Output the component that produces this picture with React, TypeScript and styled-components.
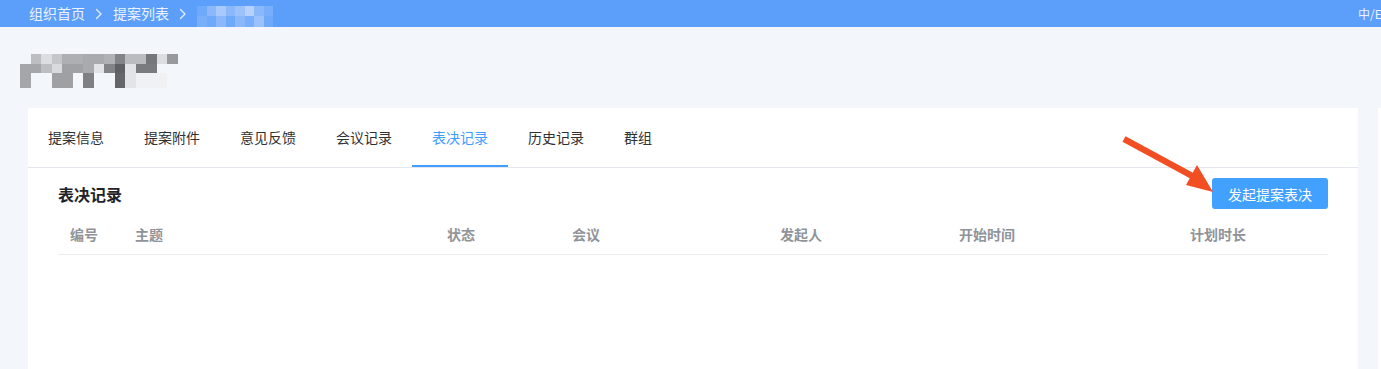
import React, { useState } from 'react';
import styled, { createGlobalStyle } from 'styled-components';

const GlobalStyle = createGlobalStyle`
   html, body {
      margin: 0;
      padding: 0;
      background: #f3f6fb;
      overflow: hidden;
   }
   body {
      font-family: "Noto Sans CJK SC", "Noto Sans", "Liberation Sans", sans-serif;
      -webkit-font-smoothing: antialiased;
   }
`;

const tabs = ['提案信息', '提案附件', '意见反馈', '会议记录', '表决记录', '历史记录', '群组'];

const columns = [
   { label: '编号', width: 65 },
   { label: '主题', width: 312 },
   { label: '状态', width: 125 },
   { label: '会议', width: 208 },
   { label: '发起人', width: 179 },
   { label: '开始时间', width: 231 },
   { label: '计划时长', width: 150 },
];

// pixelated (blurred) title, 15 x 3 cells
const B = 'transparent';
const titleMosaic = [
   [B, '#bdbec2', '#dcdde1', '#c5c6ca', '#aeafb3', '#aeafb3', '#a9aaae', '#a9aaae', '#b0b1b5', '#838488', '#bbbcc0', '#bbbcc0', '#76777b', '#dcdde1', '#98999d'],
   ['#a5a6aa', '#a5a6aa', '#bdbec2', '#d9dade', '#a0a1a5', '#a0a1a5', '#a9aaae', '#e2e3e7', '#838488', '#5f6064', '#e2e3e7', '#7a7b7f', '#7a7b7f', B, B],
   ['#a5a6aa', B, B, '#9fa0a4', '#9fa0a4', B, '#7f8084', B, B, '#65666a', '#e3e4e8', '#eff1f5', '#eff1f5', '#eff1f5', B],
];

const crumbMosaic = [
   ['#6fa9fa', '#8ab8fb', '#a7c9fc', '#8ab8fb', '#9cc2fc', '#b5d1fc', '#8ab8fb', '#78aefa'],
   ['#78aefa', '#6fa9fa', '#8ab8fb', '#6fa9fa', '#8ab8fb', '#78aefa', '#9cc2fc', '#6fa9fa'],
];

const Chevron = () => (
   <svg width="8" height="12" viewBox="0 0 8 12" fill="none">
      <path d="M1.5 1.5 L6 6 L1.5 10.5" stroke="#e6efff" strokeWidth="1.3" strokeLinecap="round" strokeLinejoin="round" />
   </svg>
);

const App: React.FC = () => {
   const [active, setActive] = useState(4);

   return (
      <>
         <GlobalStyle />
         <TopBar>
            <Breadcrumb>
               <Crumb>组织首页</Crumb>
               <Chevron />
               <Crumb>提案列表</Crumb>
               <Chevron />
               <Mosaic $cols={8} $cell={9.5} $rows="10px 11px" $bottom>
                  {crumbMosaic.flat().map((c, i) => (
                     <Cell key={i} $color={c} />
                  ))}
               </Mosaic>
            </Breadcrumb>
            <LangSwitch>中/EN</LangSwitch>
         </TopBar>

         <PageHead>
            <Mosaic $cols={15} $cell={10.5} $rows="10px 9px 15px">
               {titleMosaic.flat().map((c, i) => (
                  <Cell key={i} $color={c} />
               ))}
            </Mosaic>
         </PageHead>

         <Cards>
            <Card>
               <Tabs>
                  {tabs.map((t, i) => (
                     <Tab key={t} $active={i === active} onClick={() => setActive(i)}>
                        {t}
                     </Tab>
                  ))}
               </Tabs>

               <Body>
                  <TitleRow>
                     <SectionTitle>表决记录</SectionTitle>
                     <PrimaryButton>发起提案表决</PrimaryButton>
                  </TitleRow>

                  <TableHead>
                     {columns.map(c => (
                        <HeadCell key={c.label}>{c.label}</HeadCell>
                     ))}
                  </TableHead>
               </Body>

               <Arrow width="100" height="62" viewBox="0 0 100 62">
                  <line x1="4" y1="5" x2="76" y2="44" stroke="#f24e24" strokeWidth="6.5" strokeLinecap="butt" />
                  <polygon points="93,58 66,51 77,31" fill="#f24e24" />
               </Arrow>
            </Card>
            <SideCard />
         </Cards>
      </>
   );
};

export default App;

const TopBar = styled.header`
   height: 27px;
   background: #5c9ffa;
   display: flex;
   align-items: center;
   justify-content: space-between;
   padding-left: 29px;
`;

const Breadcrumb = styled.nav`
   display: flex;
   align-items: center;
   gap: 10px;
   height: 27px;
`;

const Crumb = styled.span`
   color: #eaf2ff;
   font-size: 14px;
   line-height: 27px;
`;

const LangSwitch = styled.span`
   width: 23px;
   overflow: hidden;
   white-space: nowrap;
   color: #eaf2ff;
   font-size: 12px;
   line-height: 27px;
`;

const Mosaic = styled.div<{ $cols: number; $cell: number; $rows: string; $bottom?: boolean }>`
   display: grid;
   grid-template-columns: repeat(${p => p.$cols}, ${p => p.$cell}px);
   grid-template-rows: ${p => p.$rows};
   align-self: ${p => (p.$bottom ? 'flex-end' : 'flex-start')};
`;

const Cell = styled.div<{ $color: string }>`
   background: ${p => p.$color};
`;

const PageHead = styled.div`
   height: 81px;
   box-sizing: border-box;
   padding: 27px 0 0 20px;
   display: flex;
   align-items: flex-start;
`;

const Cards = styled.div`
   display: flex;
   gap: 20px;
   padding-left: 28px;
`;

const Card = styled.section`
   position: relative;
   width: 1330px;
   flex-shrink: 0;
   height: 261px;
   background: #fff;
`;

const SideCard = styled.div`
   width: 200px;
   flex-shrink: 0;
   height: 261px;
   background: #fff;
`;

const Tabs = styled.div`
   display: flex;
   height: 60px;
   box-sizing: border-box;
   border-bottom: 1px solid #e4e7ed;
`;

const Tab = styled.div<{ $active: boolean }>`
   padding: 0 20px;
   height: 59px;
   line-height: 59px;
   font-size: 14px;
   color: ${p => (p.$active ? '#409eff' : '#303133')};
   box-shadow: ${p => (p.$active ? 'inset 0 -2px 0 #409eff' : 'none')};
   cursor: pointer;
`;

const Body = styled.div`
   padding: 10px 30px 0;
`;

const TitleRow = styled.div`
   display: flex;
   align-items: center;
   justify-content: space-between;
   height: 31px;
`;

const SectionTitle = styled.h2`
   margin: 0;
   font-size: 16px;
   font-weight: 700;
   color: #1f2329;
`;

const PrimaryButton = styled.button`
   height: 31px;
   width: 116px;
   border: none;
   border-radius: 3px;
   background: #42a0ff;
   color: #fff;
   font-family: inherit;
   font-size: 14px;
   cursor: pointer;
`;

const TableHead = styled.div`
   display: grid;
   grid-template-columns: ${columns.map(c => `${c.width}px`).join(' ')};
   margin-top: 5px;
   height: 40px;
   border-bottom: 1px solid #ebeef5;
`;

const HeadCell = styled.div`
   padding-left: 12px;
   line-height: 40px;
   font-size: 14px;
   font-weight: 700;
   color: #909399;
`;

const Arrow = styled.svg`
   position: absolute;
   left: 1092px;
   top: 26px;
   pointer-events: none;
`;
